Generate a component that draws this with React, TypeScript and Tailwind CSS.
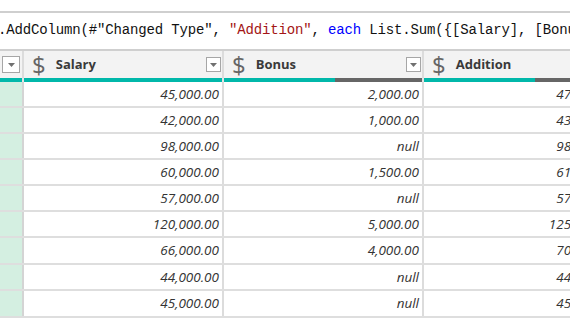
import React from "react";

type Row = { salary: string; bonus: string; addition: string; h: string };

const rows: Row[] = [
  { salary: "45,000.00", bonus: "2,000.00", addition: "47,000.00", h: "h-[26px]" },
  { salary: "42,000.00", bonus: "1,000.00", addition: "43,000.00", h: "h-[26px]" },
  { salary: "98,000.00", bonus: "null", addition: "98,000.00", h: "h-[26px]" },
  { salary: "60,000.00", bonus: "1,500.00", addition: "61,500.00", h: "h-[26px]" },
  { salary: "57,000.00", bonus: "null", addition: "57,000.00", h: "h-[26px]" },
  { salary: "120,000.00", bonus: "5,000.00", addition: "125,000.00", h: "h-[26px]" },
  { salary: "66,000.00", bonus: "4,000.00", addition: "70,000.00", h: "h-[27px]" },
  { salary: "44,000.00", bonus: "null", addition: "44,000.00", h: "h-[26px]" },
  { salary: "45,000.00", bonus: "null", addition: "45,000.00", h: "h-[27px]" },
];

const DropBox = () => (
  <div className="w-[15px] h-[15px] border border-[#a6a6a6] bg-white flex items-center justify-center">
    <svg width="7" height="4" viewBox="0 0 7 4">
      <path d="M0 0h7L3.5 4z" fill="#707070" />
    </svg>
  </div>
);

const Header = ({ name, last }: { name: string; last?: boolean }) => (
  <div
    className={`relative flex items-center h-full w-[200px] shrink-0 ${
      last ? "" : "border-r-2 border-[#dcdcdc]"
    }`}
  >
    <span className="ml-[8px] text-[24px] leading-none font-normal text-[#666] font-['Open_Sans',sans-serif]">
      $
    </span>
    <span className="ml-[10px] text-[13px] font-bold text-[#3a3a3a] font-['Open_Sans',sans-serif]">
      {name}
    </span>
    {!last && (
      <div className="ml-auto mr-[1px]">
        <DropBox />
      </div>
    )}
  </div>
);

const Cell = ({ value, last }: { value: string; last?: boolean }) => (
  <div
    className={`w-[200px] shrink-0 flex items-center justify-end text-[13.5px] italic text-[#333] font-['Open_Sans',sans-serif] ${
      last ? "pr-[9px]" : "pr-[3px] border-r-2 border-[#dcdcdc]"
    }`}
  >
    {value}
  </div>
);

export default function App() {
  return (
    <div className="w-[570px] h-[332px] overflow-hidden bg-white">
      <div className="h-[11px]" />
      {/* formula bar */}
      <div className="h-[40px] border-t-2 border-b-2 border-[#cfcfcf] flex items-start pt-[7px] overflow-hidden">
        <div className="ml-[-2px] whitespace-pre text-[14px] tracking-[-0.15px] text-[#111] font-['Liberation_Mono',monospace]">
          .AddColumn(#"Changed Type", <span className="text-[#a31515]">"Addition"</span>,{" "}
          <span className="text-[#0000ff]">each</span> List.Sum({"{"}[Salary], [Bonus]{"}"}))
        </div>
      </div>
      {/* header */}
      <div className="flex h-[27px] bg-[#f3f3f3]">
        <div className="w-[24px] shrink-0 border-r-2 border-[#dcdcdc] flex items-center pl-[2px]">
          <div className="w-[18px] h-[17px] border border-[#a6a6a6] bg-white flex items-center justify-center">
            <svg width="7" height="4" viewBox="0 0 7 4">
              <path d="M0 0h7L3.5 4z" fill="#707070" />
            </svg>
          </div>
        </div>
        <Header name="Salary" />
        <Header name="Bonus" />
        <Header name="Addition" last />
      </div>
      {/* quality bars */}
      <div className="flex h-[4px]">
        <div className="w-[24px] shrink-0 border-r-2 border-[#e4e4e4] bg-[#01b8aa]" />
        <div className="w-[200px] shrink-0 border-r-2 border-[#e4e4e4] bg-[#01b8aa]" />
        <div className="w-[200px] shrink-0 border-r-2 border-[#e4e4e4] flex">
          <div className="w-[111px] bg-[#01b8aa]" />
          <div className="flex-1 bg-[#666]" />
        </div>
        <div className="w-[200px] shrink-0 flex">
          <div className="w-[111px] bg-[#01b8aa]" />
          <div className="flex-1 bg-[#666]" />
        </div>
      </div>
      {/* rows */}
      {rows.map((r, i) => (
        <div key={i} className={`flex ${r.h} border-b-2 border-[#dedede]`}>
          <div className="w-[24px] shrink-0 border-r-2 border-[#d4d4d4] bg-[#d4efe1]" />
          <Cell value={r.salary} />
          <Cell value={r.bonus} />
          <Cell value={r.addition} last />
        </div>
      ))}
    </div>
  );
}
